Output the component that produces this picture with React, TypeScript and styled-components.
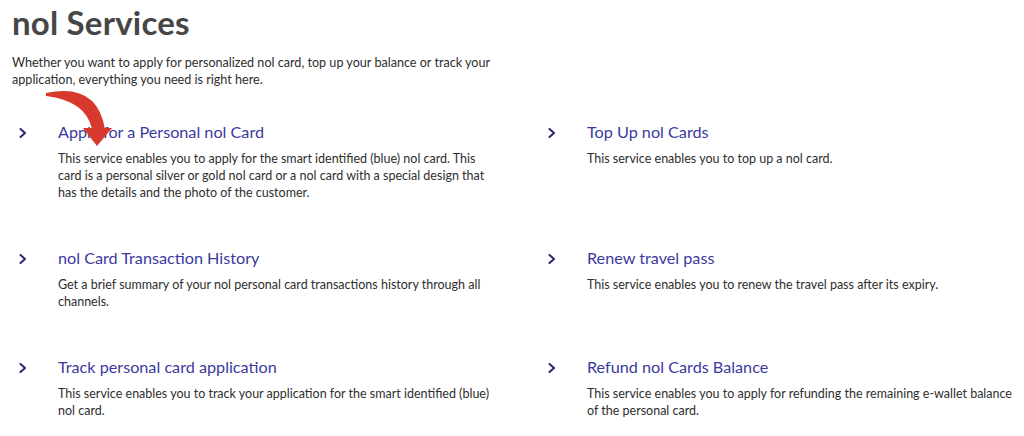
import styled, { createGlobalStyle } from 'styled-components';

const GlobalStyle = createGlobalStyle`
  html, body {
    margin: 0;
    padding: 0;
    background: #ffffff;
  }
  body {
    font-family: Lato, "Noto Sans", sans-serif;
    -webkit-font-smoothing: antialiased;
  }
`;

const Page = styled.main`
  position: relative;
  width: 1024px;
  height: 436px;
  overflow: hidden;
  box-sizing: border-box;
  padding: 2px 0 0 12px;
`;

const Heading = styled.h1`
  margin: 0;
  font-size: 33px;
  line-height: 40px;
  font-weight: 700;
  color: #464646;
  letter-spacing: 0.2px;
`;

const Intro = styled.p`
  margin: 12px 0 0;
  max-width: 500px;
  font-size: 12.6px;
  line-height: 17px;
  color: #2e2e2e;
`;

const ServiceGrid = styled.div`
  display: grid;
  grid-template-columns: 529px 1fr;
  row-gap: 47px;
  margin-top: 34px;
`;

const Service = styled.div`
  display: grid;
  grid-template-columns: 46px 1fr;
  align-items: start;
`;

const Chevron = styled.svg`
  display: block;
  margin: 6px 0 0 7px;
  width: 8px;
  height: 10px;
`;

const Body = styled.div`
  display: flex;
  flex-direction: column;
  gap: 8px;
`;

const ServiceTitle = styled.a`
  font-size: 16.2px;
  line-height: 20px;
  color: #3b3a9e;
  text-decoration: none;
`;

const ServiceText = styled.p`
  margin: 0;
  max-width: 440px;
  font-size: 12.5px;
  line-height: 17px;
  color: #2e2e2e;
`;

const Pointer = styled.svg`
  position: absolute;
  left: 0;
  top: 0;
  width: 130px;
  height: 160px;
  pointer-events: none;
`;

const services = [
  {
    title: 'Apply for a Personal nol Card',
    text: 'This service enables you to apply for the smart identified (blue) nol card. This card is a personal silver or gold nol card or a nol card with a special design that has the details and the photo of the customer.',
  },
  {
    title: 'Top Up nol Cards',
    text: 'This service enables you to top up a nol card.',
  },
  {
    title: 'nol Card Transaction History',
    text: 'Get a brief summary of your nol personal card transactions history through all channels.',
  },
  {
    title: 'Renew travel pass',
    text: 'This service enables you to renew the travel pass after its expiry.',
  },
  {
    title: 'Track personal card application',
    text: 'This service enables you to track your application for the smart identified (blue) nol card.',
  },
  {
    title: 'Refund nol Cards Balance',
    text: 'This service enables you to apply for refunding the remaining e-wallet balance of the personal card.',
  },
];

export default function App() {
  return (
    <>
      <GlobalStyle />
      <Page>
        <Heading>nol Services</Heading>
        <Intro>
          Whether you want to apply for personalized nol card, top up your balance or track your
          application, everything you need is right here.
        </Intro>
        <ServiceGrid>
          {services.map((s) => (
            <Service key={s.title}>
              <Chevron viewBox="0 0 8 10">
                <polyline
                  points="1.5,1 6,5 1.5,9"
                  fill="none"
                  stroke="#28286e"
                  strokeWidth="2"
                  strokeLinecap="round"
                  strokeLinejoin="round"
                />
              </Chevron>
              <Body>
                <ServiceTitle href="#">{s.title}</ServiceTitle>
                <ServiceText>{s.text}</ServiceText>
              </Body>
            </Service>
          ))}
        </ServiceGrid>
        <Pointer viewBox="0 0 130 160">
          <path
            d="M46 93 Q97 82 105 129 L92 129 Q86 101 46 96 Z"
            fill="#d8392d"
          />
          <polygon points="83,128 112,128 97,146" fill="#d8392d" />
        </Pointer>
      </Page>
    </>
  );
}
